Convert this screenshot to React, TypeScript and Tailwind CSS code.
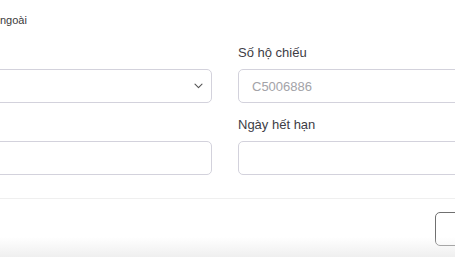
import React from "react";

export default function App() {
  return (
    <div
      className="relative w-[455px] h-[257px] overflow-hidden bg-white text-[#333]"
      style={{ fontFamily: '"Liberation Sans", Arial, sans-serif' }}
    >
      <div className="pt-[13px] text-[11px] leading-[14px] text-[#3a3a3a]">ngoài</div>

      <div className="mt-[19px] ml-[-108px] grid grid-cols-[320px_320px] gap-x-[26px] gap-y-[15px]">
        <div className="flex flex-col">
          <div className="h-[14px] mb-[9px]" />
          <div className="h-[34px] rounded-[5px] border border-[#d3d2dc] flex items-center justify-end pr-[8px]">
            <svg width="9" height="6" viewBox="0 0 9 6" fill="none">
              <path d="M1 1.2 L4.5 4.6 L8 1.2" stroke="#555" strokeWidth="1.1" strokeLinecap="round" strokeLinejoin="round" />
            </svg>
          </div>
        </div>
        <div className="flex flex-col">
          <label className="h-[14px] mb-[9px] text-[13px] leading-[14px] text-[#3d3d45]">Số hộ chiếu</label>
          <input
            placeholder="C5006886"
            className="h-[34px] rounded-[5px] border border-[#d3d2dc] px-[13px] text-[13px] outline-none placeholder:text-[#a3a3a8]"
            style={{ fontFamily: '"Liberation Sans", Arial, sans-serif' }}
          />
        </div>
        <div className="flex flex-col">
          <div className="h-[14px] mb-[9px]" />
          <div className="h-[34px] rounded-[5px] border border-[#d3d2dc]" />
        </div>
        <div className="flex flex-col">
          <label className="h-[14px] mb-[9px] text-[13px] leading-[14px] text-[#3d3d45]">Ngày hết hạn</label>
          <div className="h-[34px] rounded-[5px] border border-[#d3d2dc]" />
        </div>
      </div>

      <div className="mt-[23px] border-t border-[#efefef] pt-[13px] flex">
        <div className="ml-[435px] w-[60px] shrink-0 h-[34px] rounded-[5px] border border-[#707070]" />
      </div>

      <div className="pointer-events-none absolute left-0 right-0 bottom-0 h-[20px] bg-gradient-to-b from-white/0 to-[#efefef]" />
    </div>
  );
}
